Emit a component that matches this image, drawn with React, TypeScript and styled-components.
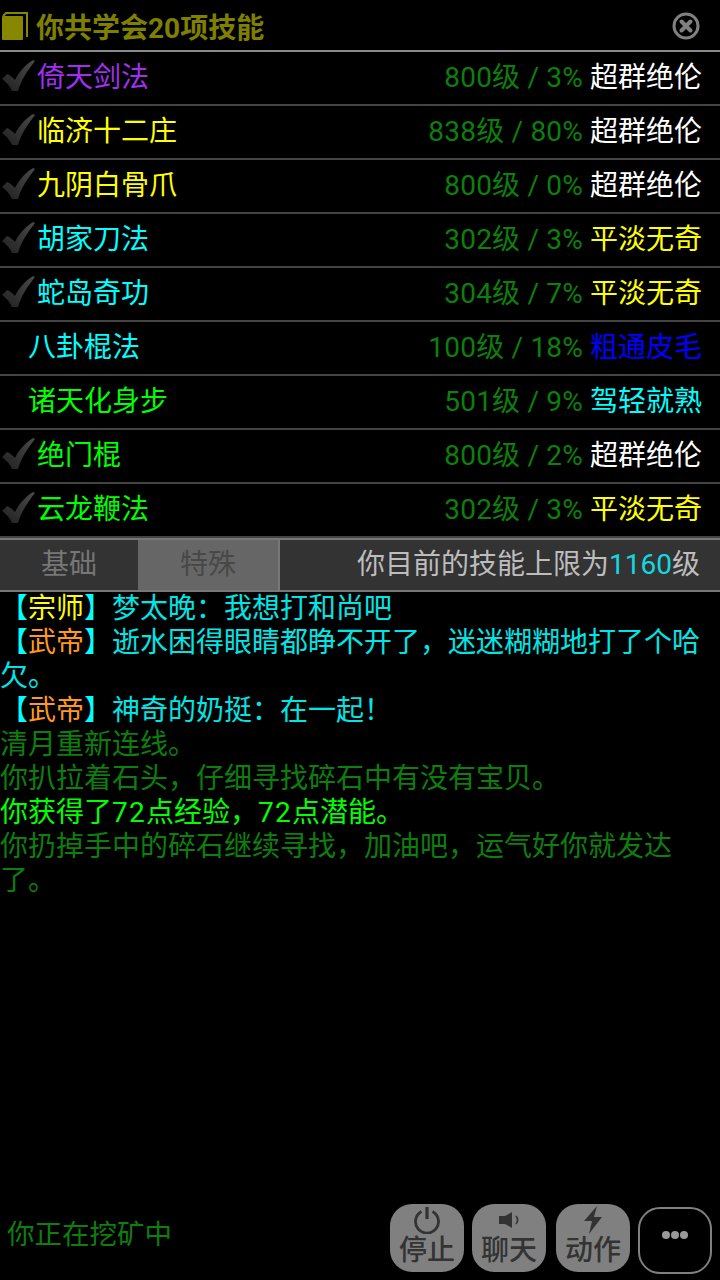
import React from "react";
import styled, { createGlobalStyle } from "styled-components";

const GlobalStyle = createGlobalStyle`
  html, body {
    margin: 0;
    padding: 0;
    background: #000;
  }
  body {
    font-family: Roboto, "Noto Sans CJK SC", sans-serif;
  }
`;

const DIM_GREEN = "#0c7f0c";
const GOLD = "#ffff00";
const WHITE = "#ffffff";
const CYAN = "#00ffff";
const LOG_CYAN = "#00e6e6";
const ORANGE = "#ff9a1e";

const Page = styled.div`
  width: 720px;
  height: 1280px;
  display: flex;
  flex-direction: column;
  background: #000;
  overflow: hidden;
`;

const Header = styled.div`
  height: 52px;
  box-sizing: border-box;
  display: flex;
  align-items: center;
  padding: 2px 20px 0 2px;
  border-bottom: 2px solid #8a8a8a;
`;

const HeaderTitle = styled.div`
  flex: 1;
  margin: 6px 0 0 6px;
  font-size: 28px;
  font-weight: 700;
  color: #808000;
  line-height: 40px;
`;

const Row = styled.div`
  height: 54px;
  box-sizing: border-box;
  display: flex;
  align-items: center;
  padding-right: 18px;
  border-bottom: 2px solid #444;
  font-size: 28px;
  line-height: 34px;
`;

const CheckSlot = styled.div<{ $learned: boolean }>`
  width: ${(p) => (p.$learned ? "37px" : "28px")};
  flex: none;
  display: flex;
  align-items: center;
  padding: 0 0 4px 2px;
  box-sizing: border-box;
`;

const SkillName = styled.div<{ $color: string }>`
  flex: 1;
  color: ${(p) => p.$color};
`;

const SkillLevel = styled.div`
  color: ${DIM_GREEN};
  letter-spacing: 0.2px;
  margin-right: 7px;
`;

const SkillRank = styled.div<{ $color: string }>`
  color: ${(p) => p.$color};
`;

const TabBar = styled.div`
  height: 54px;
  box-sizing: border-box;
  display: flex;
  align-items: stretch;
  background: #333;
  border-top: 2px solid #777;
  border-bottom: 2px solid #777;
`;

const Tab = styled.div<{ $active?: boolean }>`
  width: ${(p) => (p.$active ? "142px" : "138px")};
  box-sizing: border-box;
  text-align: center;
  line-height: 50px;
  font-size: 28px;
  color: ${(p) => (p.$active ? "#484848" : "#777")};
  background: ${(p) => (p.$active ? "#666" : "transparent")};
  border-right: ${(p) => (p.$active ? "2px solid #777" : "none")};
`;

const LimitText = styled.div`
  flex: 1;
  text-align: right;
  padding-right: 20px;
  line-height: 50px;
  font-size: 28px;
  color: #bdbdbd;
`;

const LimitValue = styled.span`
  color: #14d8e0;
`;

const Log = styled.div`
  flex: 1;
  font-size: 28px;
  line-height: 34px;
`;

const LogLine = styled.div<{ $color: string }>`
  color: ${(p) => p.$color};
`;

const Tag = styled.span<{ $color: string }>`
  color: ${(p) => p.$color};
`;

const Digits = styled.span`
  letter-spacing: 1.25px;
`;

const Footer = styled.div`
  display: flex;
  align-items: flex-start;
  padding: 0 8px 6px 8px;
  gap: 8px;
`;

const Status = styled.div`
  flex: 1;
  margin: 14px 0 0 -1px;
  font-size: 27.5px;
  line-height: 34px;
  color: ${DIM_GREEN};
`;

const ActionButton = styled.div<{ $extraGap?: boolean }>`
  width: 74px;
  height: 68px;
  margin-left: ${(p) => (p.$extraGap ? "2px" : "0")};
  padding-top: 2px;
  box-sizing: border-box;
  border-radius: 22px;
  background: #808080;
  color: #333;
  display: flex;
  flex-direction: column;
  align-items: center;
  font-size: 28px;
  font-weight: 500;
  line-height: 34px;
`;

const MoreButton = styled.div`
  width: 74px;
  height: 67px;
  margin-top: 3px;
  padding-bottom: 12px;
  border-radius: 22px;
  border: 2px solid #808080;
  box-sizing: border-box;
  display: flex;
  align-items: center;
  justify-content: center;
`;

const BookIcon = () => (
  <svg width="28" height="28" viewBox="0 0 28 28">
    <path d="M1 4 L4 1 H25 V25" fill="none" stroke="#878700" strokeWidth="2" />
    <rect x="0" y="4" width="21" height="24" rx="1" fill="#878700" />
  </svg>
);

const CloseIcon = () => (
  <svg width="28" height="28" viewBox="0 0 28 28">
    <circle cx="14" cy="14" r="12" fill="none" stroke="#808080" strokeWidth="3" />
    <path d="M9.5 9.5 L18.5 18.5 M18.5 9.5 L9.5 18.5" stroke="#808080" strokeWidth="4" strokeLinecap="round" />
  </svg>
);

const CheckIcon = () => (
  <svg width="34" height="32" viewBox="0 0 34 32">
    <defs>
      <linearGradient id="chk" x1="1" y1="0" x2="0" y2="1">
        <stop offset="0" stopColor="#4a4a4a" />
        <stop offset="1" stopColor="#202020" />
      </linearGradient>
    </defs>
    <path
      d="M0 19 L5 14 C8 15 11 18 13 20 C17 12 24 4 31 0 L33 1 C26 10 19 20 16 31 L10 31 C8 26 4 22 0 19 Z"
      fill="url(#chk)"
    />
  </svg>
);

const PowerIcon = () => (
  <svg width="28" height="28" viewBox="0 0 28 28">
    <path d="M8.5 5.5 A11.5 11.5 0 1 0 19.5 5.5" fill="none" stroke="#333" strokeWidth="2.8" />
    <path d="M14 1 V13" stroke="#333" strokeWidth="3.2" />
  </svg>
);

const SpeakerIcon = () => (
  <svg width="28" height="28" viewBox="0 0 28 28">
    <path d="M4 10 H10 L17 6 V22 L10 18 H4 Z" fill="#333" />
    <path d="M21 10 C23 12.5 23 15.5 21 18" fill="none" stroke="#333" strokeWidth="1.6" />
  </svg>
);

const BoltIcon = () => (
  <svg width="20" height="28" viewBox="0 0 20 28">
    <path d="M14 0 L1 15 H9 L6 28 L19 11 H11 Z" fill="#333" />
  </svg>
);

const DotsIcon = () => (
  <svg width="28" height="10" viewBox="0 0 28 10">
    <circle cx="5" cy="5" r="4" fill="#999" />
    <circle cx="14" cy="5" r="4" fill="#999" />
    <circle cx="23" cy="5" r="4" fill="#999" />
  </svg>
);

const skills = [
  { name: "倚天剑法", color: "#a030f0", level: "800级 / 3%", rank: "超群绝伦", rankColor: WHITE, learned: true },
  { name: "临济十二庄", color: GOLD, level: "838级 / 80%", rank: "超群绝伦", rankColor: WHITE, learned: true },
  { name: "九阴白骨爪", color: GOLD, level: "800级 / 0%", rank: "超群绝伦", rankColor: WHITE, learned: true },
  { name: "胡家刀法", color: CYAN, level: "302级 / 3%", rank: "平淡无奇", rankColor: GOLD, learned: true },
  { name: "蛇岛奇功", color: CYAN, level: "304级 / 7%", rank: "平淡无奇", rankColor: GOLD, learned: true },
  { name: "八卦棍法", color: CYAN, level: "100级 / 18%", rank: "粗通皮毛", rankColor: "#0000ff", learned: false },
  { name: "诸天化身步", color: "#00ff00", level: "501级 / 9%", rank: "驾轻就熟", rankColor: CYAN, learned: false },
  { name: "绝门棍", color: "#00ff00", level: "800级 / 2%", rank: "超群绝伦", rankColor: WHITE, learned: true },
  { name: "云龙鞭法", color: "#00ff00", level: "302级 / 3%", rank: "平淡无奇", rankColor: GOLD, learned: true },
];

export default function App() {
  return (
    <Page>
      <GlobalStyle />
      <Header>
        <BookIcon />
        <HeaderTitle>你共学会20项技能</HeaderTitle>
        <CloseIcon />
      </Header>
      {skills.map((s) => (
        <Row key={s.name}>
          <CheckSlot $learned={s.learned}>{s.learned && <CheckIcon />}</CheckSlot>
          <SkillName $color={s.color}>{s.name}</SkillName>
          <SkillLevel>{s.level}</SkillLevel>
          <SkillRank $color={s.rankColor}>{s.rank}</SkillRank>
        </Row>
      ))}
      <TabBar>
        <Tab>基础</Tab>
        <Tab $active>特殊</Tab>
        <LimitText>
          你目前的技能上限为<LimitValue>1160</LimitValue>级
        </LimitText>
      </TabBar>
      <Log>
        <LogLine $color={LOG_CYAN}>
          <Tag $color={CYAN}>【</Tag>
          <Tag $color={GOLD}>宗师</Tag>
          <Tag $color={CYAN}>】</Tag>梦太晚：我想打和尚吧
        </LogLine>
        <LogLine $color={LOG_CYAN}>
          <Tag $color={CYAN}>【</Tag>
          <Tag $color={ORANGE}>武帝</Tag>
          <Tag $color={CYAN}>】</Tag>逝水困得眼睛都睁不开了，迷迷糊糊地打了个哈欠。
        </LogLine>
        <LogLine $color={LOG_CYAN}>
          <Tag $color={CYAN}>【</Tag>
          <Tag $color={ORANGE}>武帝</Tag>
          <Tag $color={CYAN}>】</Tag>神奇的奶挺：在一起！
        </LogLine>
        <LogLine $color={DIM_GREEN}>清月重新连线。</LogLine>
        <LogLine $color={DIM_GREEN}>你扒拉着石头，仔细寻找碎石中有没有宝贝。</LogLine>
        <LogLine $color="#00ff00">
          你获得了<Digits>72</Digits>点经验，<Digits>72</Digits>点潜能。
        </LogLine>
        <LogLine $color={DIM_GREEN}>你扔掉手中的碎石继续寻找，加油吧，运气好你就发达了。</LogLine>
      </Log>
      <Footer>
        <Status>你正在挖矿中</Status>
        <ActionButton>
          <PowerIcon />
          <span>停止</span>
        </ActionButton>
        <ActionButton>
          <SpeakerIcon />
          <span>聊天</span>
        </ActionButton>
        <ActionButton $extraGap>
          <BoltIcon />
          <span>动作</span>
        </ActionButton>
        <MoreButton>
          <DotsIcon />
        </MoreButton>
      </Footer>
    </Page>
  );
}
